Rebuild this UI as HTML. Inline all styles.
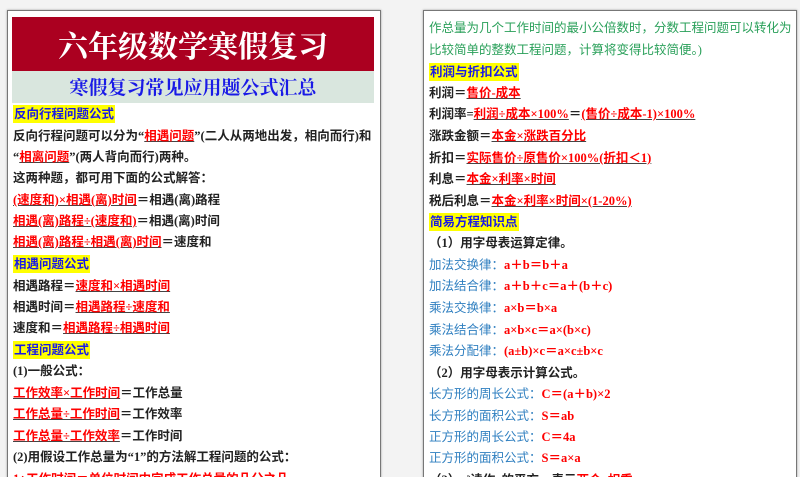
<!DOCTYPE html>
<html><head><meta charset="utf-8"><style>
html,body{margin:0;padding:0;width:800px;height:477px;overflow:hidden;background:#f3f3f3;}
body{font-family:"Liberation Serif","Noto Sans CJK SC",sans-serif;font-size:12.5px;font-weight:bold;color:#222;position:relative;}
.page{position:absolute;background:#fff;border:1px solid #777;box-shadow:0 0 2px #999;}
.l{position:absolute;white-space:nowrap;line-height:16px;}
.r{color:#f00;text-decoration:underline;text-decoration-color:#444;}
.rr{color:#f00;}
.h{background:#ff0;color:#1a1ae6;padding:2px 1px;}
.g{color:#2aa05a;font-weight:normal;}
.b{color:#2f7fc0;font-weight:normal;}
.n{font-weight:normal;}
</style></head><body>
<div class="page" style="left:7px;top:10px;width:372px;height:480px;"></div>
<div class="page" style="left:423px;top:10px;width:372px;height:480px;"></div>
<div style="position:absolute;left:12px;top:17px;width:362px;height:54px;background:#ab0020;color:#fff;font-family:'Noto Serif CJK SC',serif;font-size:30px;font-weight:bold;text-align:center;line-height:54px;">六年级数学寒假复习</div>
<div style="position:absolute;left:12px;top:71px;width:362px;height:32px;background:#d9e6de;color:#1a1ae6;font-family:'Noto Serif CJK SC',serif;font-size:19px;font-weight:bold;text-align:center;line-height:32px;">寒假复习常见应用题公式汇总</div>
<div style="position:absolute;left:13px;top:0;">
<div class="l" style="top:106px"><span class="h">反向行程问题公式</span></div>
<div class="l" style="top:128px">反向行程问题可以分为“<span class="r">相遇问题</span>”(二人从两地出发，相向而行)和</div>
<div class="l" style="top:149px">“<span class="r">相离问题</span>”(两人背向而行)两种。</div>
<div class="l" style="top:170px">这两种题，都可用下面的公式解答：</div>
<div class="l" style="top:192px"><span class="r">(速度和)×相遇(离)时间</span>＝相遇(离)路程</div>
<div class="l" style="top:213px"><span class="r">相遇(离)路程÷(速度和)</span>＝相遇(离)时间</div>
<div class="l" style="top:234px"><span class="r">相遇(离)路程÷相遇(离)时间</span>＝速度和</div>
<div class="l" style="top:256px"><span class="h">相遇问题公式</span></div>
<div class="l" style="top:278px">相遇路程＝<span class="r">速度和×相遇时间</span></div>
<div class="l" style="top:299px">相遇时间＝<span class="r">相遇路程÷速度和</span></div>
<div class="l" style="top:320px">速度和＝<span class="r">相遇路程÷相遇时间</span></div>
<div class="l" style="top:342px"><span class="h">工程问题公式</span></div>
<div class="l" style="top:363px">(1)一般公式：</div>
<div class="l" style="top:385px"><span class="r">工作效率×工作时间</span>＝工作总量</div>
<div class="l" style="top:406px"><span class="r">工作总量÷工作时间</span>＝工作效率</div>
<div class="l" style="top:428px"><span class="r">工作总量÷工作效率</span>＝工作时间</div>
<div class="l" style="top:449px">(2)用假设工作总量为“1”的方法解工程问题的公式：</div>
<div class="l rr" style="top:471px">1÷工作时间＝单位时间内完成工作总量的几分之几</div>
</div>
<div style="position:absolute;left:429px;top:0;">
<div class="l g" style="top:20px">作总量为几个工作时间的最小公倍数时，分数工程问题可以转化为</div>
<div class="l g" style="top:42px">比较简单的整数工程问题，计算将变得比较简便。)</div>
<div class="l" style="top:64px"><span class="h">利润与折扣公式</span></div>
<div class="l" style="top:85px">利润＝<span class="r">售价-成本</span></div>
<div class="l" style="top:106px">利润率=<span class="r">利润÷成本×100%</span>＝<span class="r">(售价÷成本-1)×100%</span></div>
<div class="l" style="top:128px">涨跌金额＝<span class="r">本金×涨跌百分比</span></div>
<div class="l" style="top:150px">折扣＝<span class="r">实际售价÷原售价×100%(折扣＜1)</span></div>
<div class="l" style="top:171px">利息＝<span class="r">本金×利率×时间</span></div>
<div class="l" style="top:193px">税后利息＝<span class="r">本金×利率×时间×(1-20%)</span></div>
<div class="l" style="top:214px"><span class="h">简易方程知识点</span></div>
<div class="l" style="top:235px">（1）用字母表运算定律。</div>
<div class="l" style="top:257px"><span class="b">加法交换律：</span><span class="rr">a＋b＝b＋a</span></div>
<div class="l" style="top:278px"><span class="b">加法结合律：</span><span class="rr">a＋b＋c＝a＋(b＋c)</span></div>
<div class="l" style="top:300px"><span class="b">乘法交换律：</span><span class="rr">a×b＝b×a</span></div>
<div class="l" style="top:322px"><span class="b">乘法结合律：</span><span class="rr">a×b×c＝a×(b×c)</span></div>
<div class="l" style="top:343px"><span class="b">乘法分配律：</span><span class="rr">(a±b)×c＝a×c±b×c</span></div>
<div class="l" style="top:365px">（2）用字母表示计算公式。</div>
<div class="l" style="top:386px"><span class="b">长方形的周长公式：</span><span class="rr">C＝(a＋b)×2</span></div>
<div class="l" style="top:408px"><span class="b">长方形的面积公式：</span><span class="rr">S＝ab</span></div>
<div class="l" style="top:429px"><span class="b">正方形的周长公式：</span><span class="rr">C＝4a</span></div>
<div class="l" style="top:450px"><span class="b">正方形的面积公式：</span><span class="rr">S＝a×a</span></div>
<div class="l" style="top:472px">（3）a²读作a的平方，表示<span class="rr">两个a相乘</span></div>
</div>
</body></html>
